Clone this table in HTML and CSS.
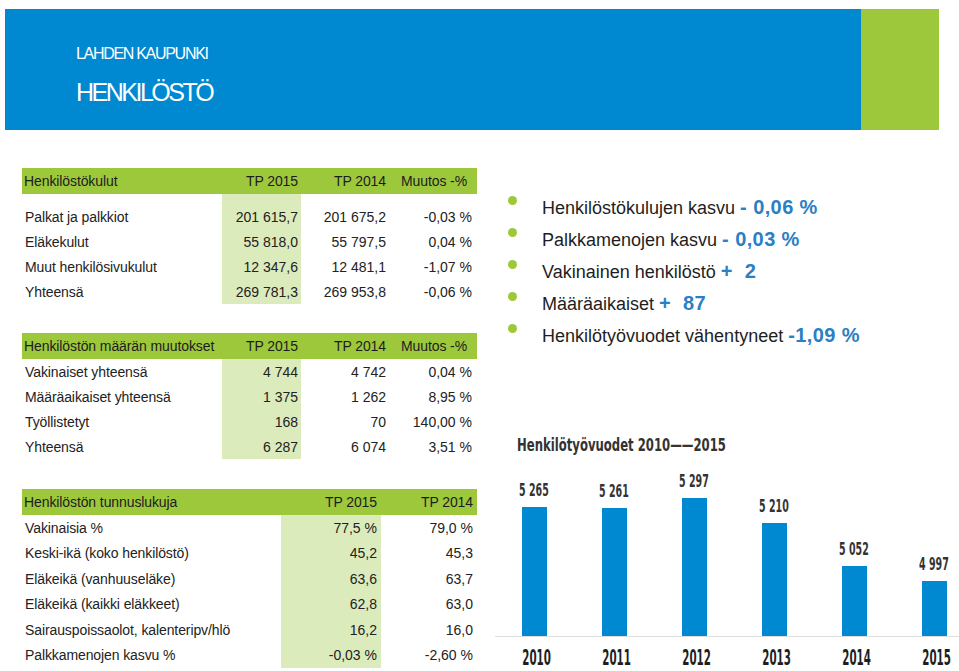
FILE: index.html
```html
<!DOCTYPE html>
<html lang="fi">
<head>
<meta charset="utf-8">
<title>Henkilöstö</title>
<link rel="stylesheet" href="styles.css">
</head>
<body>
<div class="page">
  <header class="banner">
    <div class="banner-main">
      <div class="banner-kicker">LAHDEN KAUPUNKI</div>
      <h1 class="banner-title">HENKILÖSTÖ</h1>
    </div>
    <div class="banner-accent"></div>
  </header>

  <div class="content">
    <div class="tables">
      <table class="data t-costs">
        <colgroup><col class="c-label"><col class="c-a"><col class="c-b"><col class="c-c"></colgroup>
        <thead>
          <tr class="head"><th class="lbl">Henkilöstökulut</th><th class="na">TP 2015</th><th class="nb">TP 2014</th><th class="nc">Muutos -%</th></tr>
        </thead>
        <tbody>
          <tr class="spacer"><td></td><td class="hl"></td><td></td><td></td></tr>
          <tr><td class="lbl">Palkat ja palkkiot</td><td class="hl na">201 615,7</td><td class="nb">201 675,2</td><td class="nc">-0,03 %</td></tr>
          <tr><td class="lbl">Eläkekulut</td><td class="hl na">55 818,0</td><td class="nb">55 797,5</td><td class="nc">0,04 %</td></tr>
          <tr><td class="lbl">Muut henkilösivukulut</td><td class="hl na">12 347,6</td><td class="nb">12 481,1</td><td class="nc">-1,07 %</td></tr>
          <tr><td class="lbl">Yhteensä</td><td class="hl na">269 781,3</td><td class="nb">269 953,8</td><td class="nc">-0,06 %</td></tr>
        </tbody>
      </table>

      <table class="data t-count">
        <colgroup><col class="c-label"><col class="c-a"><col class="c-b"><col class="c-c"></colgroup>
        <thead>
          <tr class="head"><th class="lbl">Henkilöstön määrän muutokset</th><th class="na">TP 2015</th><th class="nb">TP 2014</th><th class="nc">Muutos -%</th></tr>
        </thead>
        <tbody>
          <tr><td class="lbl">Vakinaiset yhteensä</td><td class="hl na">4 744</td><td class="nb">4 742</td><td class="nc">0,04 %</td></tr>
          <tr><td class="lbl">Määräaikaiset yhteensä</td><td class="hl na">1 375</td><td class="nb">1 262</td><td class="nc">8,95 %</td></tr>
          <tr><td class="lbl">Työllistetyt</td><td class="hl na">168</td><td class="nb">70</td><td class="nc">140,00 %</td></tr>
          <tr><td class="lbl">Yhteensä</td><td class="hl na">6 287</td><td class="nb">6 074</td><td class="nc">3,51 %</td></tr>
        </tbody>
      </table>

      <table class="data t-keys">
        <colgroup><col class="k-label"><col class="k-a"><col class="k-b"></colgroup>
        <thead>
          <tr class="head"><th class="lbl">Henkilöstön tunnuslukuja</th><th class="ka">TP 2015</th><th class="kb">TP 2014</th></tr>
        </thead>
        <tbody>
          <tr><td class="lbl">Vakinaisia %</td><td class="hl ka">77,5 %</td><td class="kb">79,0 %</td></tr>
          <tr><td class="lbl">Keski-ikä (koko henkilöstö)</td><td class="hl ka">45,2</td><td class="kb">45,3</td></tr>
          <tr><td class="lbl">Eläkeikä (vanhuuseläke)</td><td class="hl ka">63,6</td><td class="kb">63,7</td></tr>
          <tr><td class="lbl">Eläkeikä (kaikki eläkkeet)</td><td class="hl ka">62,8</td><td class="kb">63,0</td></tr>
          <tr><td class="lbl">Sairauspoissaolot, kalenteripv/hlö</td><td class="hl ka">16,2</td><td class="kb">16,0</td></tr>
          <tr><td class="lbl">Palkkamenojen kasvu %</td><td class="hl ka">-0,03 %</td><td class="kb">-2,60 %</td></tr>
        </tbody>
      </table>
    </div>

    <div class="side">
      <ul class="points">
        <li><span class="dot"></span><span>Henkilöstökulujen kasvu <b class="val">- 0,06 %</b></span></li>
        <li><span class="dot"></span><span>Palkkamenojen kasvu <b class="val">- 0,03 %</b></span></li>
        <li><span class="dot"></span><span>Vakinainen henkilöstö <b class="val">+&nbsp; 2</b></span></li>
        <li><span class="dot"></span><span>Määräaikaiset <b class="val">+&nbsp; 87</b></span></li>
        <li><span class="dot"></span><span>Henkilötyövuodet vähentyneet <b class="val">-1,09 %</b></span></li>
      </ul>

      <div class="chart">
        <div class="chart-title"><span class="cond">Henkilötyövuodet 2010——2015</span></div>
        <div class="plot">
          <div class="col"><div class="v"><span class="cond">5 265</span></div><div class="bar" style="height:129px"></div></div>
          <div class="col"><div class="v"><span class="cond">5 261</span></div><div class="bar" style="height:128px"></div></div>
          <div class="col"><div class="v"><span class="cond">5 297</span></div><div class="bar" style="height:138px"></div></div>
          <div class="col"><div class="v"><span class="cond">5 210</span></div><div class="bar" style="height:113px"></div></div>
          <div class="col"><div class="v"><span class="cond">5 052</span></div><div class="bar" style="height:70px"></div></div>
          <div class="col"><div class="v"><span class="cond">4 997</span></div><div class="bar" style="height:55px"></div></div>
        </div>
        <div class="years">
          <div class="yr"><span class="cond">2010</span></div>
          <div class="yr"><span class="cond">2011</span></div>
          <div class="yr"><span class="cond">2012</span></div>
          <div class="yr"><span class="cond">2013</span></div>
          <div class="yr"><span class="cond">2014</span></div>
          <div class="yr"><span class="cond">2015</span></div>
        </div>
      </div>
    </div>
  </div>
</div>
</body>
</html>
```

FILE: styles.css
```css
* { box-sizing: border-box; }

html, body {
  margin: 0;
  padding: 0;
  background: #ffffff;
}

body {
  width: 959px;
  height: 671px;
  overflow: hidden;
  font-family: "Liberation Sans", Arial, sans-serif;
  color: #222222;
}

.page {
  padding-top: 9px;
}

/* ---------- banner ---------- */
.banner {
  display: flex;
  margin-left: 5px;
  width: 934px;
  height: 121px;
}

.banner-main {
  flex: 1;
  background: #0088d1;
  padding-left: 71px;
  padding-top: 35px;
  color: #ffffff;
}

.banner-accent {
  width: 78px;
  background: #9ec83c;
}

.banner-kicker {
  font-size: 16px;
  line-height: 20px;
  letter-spacing: -1.3px;
}

.banner-title {
  margin: 13px 0 0 0;
  font-size: 25px;
  line-height: 30px;
  font-weight: normal;
  letter-spacing: -2.5px;
}

/* ---------- layout ---------- */
.content {
  display: flex;
  margin-top: 38px;
  padding-left: 22px;
  gap: 18px;
}

.tables {
  width: 455px;
  display: flex;
  flex-direction: column;
}

.side {
  width: 464px;
}

/* ---------- tables ---------- */
table.data {
  width: 455px;
  border-collapse: collapse;
  border-spacing: 0;
  table-layout: fixed;
  font-size: 14px;
}

.t-count { margin-top: 29px; }
.t-keys { margin-top: 30px; }

col.c-label { width: 200px; }
col.c-a { width: 79px; }
col.c-b { width: 89px; }
col.c-c { width: 87px; }

col.k-label { width: 259px; }
col.k-a { width: 100px; }
col.k-b { width: 96px; }

table.data th,
table.data td {
  padding: 0;
  white-space: nowrap;
  font-weight: normal;
}

tr.head th {
  background: #9ec83c;
  height: 26px;
  color: #1c1c1c;
  letter-spacing: -0.1px;
}

.t-costs tbody tr { height: 25px; }
.t-costs tbody tr.spacer { height: 10px; }
.t-count tbody tr { height: 25px; }
.t-keys tbody tr { height: 25.5px; }

td.hl { background: #dcebbc; }

.lbl { text-align: left; padding-left: 3px !important; letter-spacing: -0.1px; }
th.lbl { padding-left: 2px !important; letter-spacing: -0.1px; }

.na { text-align: right; padding-right: 3px !important; }
.nb { text-align: right; padding-right: 4px !important; }
.nc { text-align: right; padding-right: 5px !important; }
th.nc { padding-right: 10px !important; }

.ka { text-align: right; padding-right: 4px !important; }
.kb { text-align: right; padding-right: 4px !important; }

/* ---------- bullet points ---------- */
.points {
  list-style: none;
  margin: 23px 0 0 0;
  padding: 0;
}

.points li {
  display: flex;
  align-items: flex-start;
  height: 32px;
  line-height: 32px;
  font-size: 18px;
  color: #1e1e1e;
}

.dot {
  flex: none;
  width: 9px;
  height: 9px;
  border-radius: 50%;
  background: #9ec83c;
  margin: 5px 25px 0 13px;
}

.val {
  color: #2a80c3;
  font-weight: bold;
  font-size: 20px;
  letter-spacing: 0.4px;
}

/* ---------- chart ---------- */
.chart {
  margin-top: 82px;
}

.cond {
  display: inline-block;
  font-family: "DejaVu Sans Condensed", "DejaVu Sans", sans-serif;
  font-weight: bold;
  white-space: nowrap;
}

.chart-title {
  height: 24px;
  line-height: 24px;
  padding-left: 22px;
  color: #333333;
  font-size: 18px;
}

.chart-title .cond {
  transform: scaleX(0.72);
  transform-origin: left center;
}

.plot {
  display: flex;
  align-items: flex-end;
  gap: 30px;
  height: 180px;
  padding-left: 14px;
  border-bottom: 1px solid #dddddd;
}

.col {
  width: 50px;
  display: flex;
  flex-direction: column;
  align-items: center;
}

.v {
  height: 20px;
  line-height: 20px;
  margin-bottom: 7px;
  font-size: 17px;
  color: #333333;
  text-align: center;
}

.v .cond {
  transform: scaleX(0.62);
}

.bar {
  width: 25px;
  background: #0088d1;
}

.years {
  display: flex;
  gap: 30px;
  padding-left: 14px;
  margin-top: 10px;
}

.yr {
  width: 50px;
  height: 22px;
  line-height: 22px;
  text-align: center;
  font-size: 22px;
  color: #1e1e1e;
}

.yr .cond {
  transform: scaleX(0.52);
}
```
